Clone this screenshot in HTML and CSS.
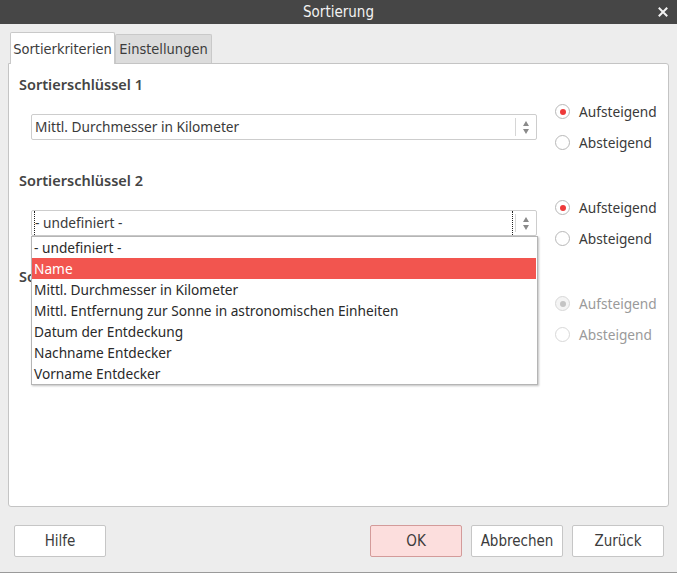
FILE: index.html
```html
<!DOCTYPE html>
<html lang="de">
<head>
<meta charset="utf-8">
<title>Sortierung</title>
<link rel="stylesheet" href="styles.css">
</head>
<body>
<div class="window">
  <header class="titlebar">
    <span class="title">Sortierung</span>
    <span class="close">
      <svg width="10" height="10" viewBox="0 0 10 10"><path d="M1.5 1.5 L8.5 8.5 M8.5 1.5 L1.5 8.5" stroke="#f2f2f2" stroke-width="2" stroke-linecap="square"/></svg>
    </span>
  </header>

  <div class="content">
    <div class="tabs">
      <div class="tab active">Sortierkriterien</div>
      <div class="tab">Einstellungen</div>
    </div>

    <div class="panel">
      <section class="section">
        <h2 class="heading">Sortierschlüssel 1</h2>
        <div class="row">
          <div class="combo">
            <span class="combo-text">Mittl. Durchmesser in Kilometer</span>
            <span class="spin"><span class="up"></span><span class="down"></span></span>
          </div>
          <div class="radios">
            <label class="radio"><span class="dot checked"></span>Aufsteigend</label>
            <label class="radio"><span class="dot"></span>Absteigend</label>
          </div>
        </div>
      </section>

      <section class="section">
        <h2 class="heading">Sortierschlüssel 2</h2>
        <div class="row">
          <div class="combo-wrap">
            <div class="combo">
              <span class="combo-text focus">- undefiniert -</span>
              <span class="spin"><span class="up"></span><span class="down"></span></span>
            </div>
            <ul class="dropdown">
              <li>- undefiniert -</li>
              <li class="selected">Name</li>
              <li>Mittl. Durchmesser in Kilometer</li>
              <li>Mittl. Entfernung zur Sonne in astronomischen Einheiten</li>
              <li>Datum der Entdeckung</li>
              <li>Nachname Entdecker</li>
              <li>Vorname Entdecker</li>
            </ul>
          </div>
          <div class="radios">
            <label class="radio"><span class="dot checked"></span>Aufsteigend</label>
            <label class="radio"><span class="dot"></span>Absteigend</label>
          </div>
        </div>
      </section>

      <section class="section">
        <h2 class="heading">Sortierschlüssel 3</h2>
        <div class="row">
          <div class="combo-spacer"></div>
          <div class="radios disabled">
            <label class="radio"><span class="dot checked"></span>Aufsteigend</label>
            <label class="radio"><span class="dot"></span>Absteigend</label>
          </div>
        </div>
      </section>
    </div>

    <div class="buttons">
      <button class="btn">Hilfe</button>
      <div class="spacer"></div>
      <button class="btn default">OK</button>
      <button class="btn">Abbrechen</button>
      <button class="btn">Zurück</button>
    </div>
  </div>
</div>
</body>
</html>
```

FILE: styles.css
```css
* { box-sizing: border-box; }

html, body {
  margin: 0;
  padding: 0;
  background: #ededed;
}

body {
  font-family: "Noto Sans", "Open Sans", sans-serif;
  font-size: 13.7px;
  color: #3a3a3a;
}

.window {
  width: 677px;
  height: 573px;
  display: flex;
  flex-direction: column;
  background: #ededed;
  border-bottom: 1px solid #9a9a9a;
}

.titlebar {
  height: 24px;
  background: #464646;
  color: #f2f2f2;
  display: flex;
  align-items: center;
  justify-content: center;
  position: relative;
  font-family: "Liberation Sans Narrow", "DejaVu Sans Condensed", sans-serif;
  font-size: 15px;
}

.close {
  position: absolute;
  right: 9px;
  top: 7px;
  width: 10px;
  height: 10px;
  display: flex;
}

.content {
  flex: 1;
  display: flex;
  flex-direction: column;
}

.tabs {
  display: flex;
  align-items: flex-end;
  padding: 8px 0 0 10px;
  height: 39px;
}

.tab {
  font-family: "Liberation Sans Narrow", "DejaVu Sans Condensed", sans-serif;
  font-size: 14.5px;
  color: #3c3c3c;
  background: #dcdcdc;
  border: 1px solid #c9c9c9;
  border-bottom: none;
  border-radius: 2px 2px 0 0;
  height: 29px;
  padding: 0 2px;
  display: flex;
  align-items: center;
  width: 97px;
  justify-content: center;
}

.tab.active {
  background: #ffffff;
  width: 105px;
  position: relative;
  z-index: 1;
  margin-bottom: -1px;
  height: 32px;
}

.panel {
  margin: 0 8px;
  height: 444px;
  background: #ffffff;
  border: 1px solid #c4c4c4;
  border-radius: 0 3px 3px 3px;
  padding: 8px 0 0 10px;
  display: flex;
  flex-direction: column;
}

.section {
  height: 96px;
  display: flex;
  flex-direction: column;
}

.heading {
  margin: 0;
  height: 24px;
  line-height: 24px;
  font-size: 14.5px;
  font-weight: 600;
  color: #444;
}

.row {
  display: flex;
  align-items: center;
  height: 62px;
}

.combo-wrap, .combo, .combo-spacer {
  margin-left: 12px;
  width: 506px;
}

.combo-wrap {
  position: relative;
  height: 26px;
}

.combo-wrap .combo {
  margin-left: 0;
}

.combo {
  height: 26px;
  border: 1px solid #cdcdcd;
  border-radius: 2px;
  background: #fff;
  display: flex;
  align-items: center;
  padding-left: 2px;
  color: #3a3a3a;
}

.combo-text {
  flex: 1;
  height: 24px;
  line-height: 24px;
  padding-left: 1px;
}

.combo-text.focus {
  border-left: 1px dotted #222;
  border-right: 1px dotted #222;
  padding-left: 0;
  margin-right: 2px;
}

.spin {
  width: 20px;
  height: 18px;
  border-left: 1px solid #d6d6d6;
  display: flex;
  flex-direction: column;
  align-items: center;
  justify-content: center;
  gap: 3px;
  margin-right: 1px;
}

.up, .down {
  width: 0;
  height: 0;
  border-left: 3px solid transparent;
  border-right: 3px solid transparent;
}
.up { border-bottom: 5px solid #8a8a8a; }
.down { border-top: 5px solid #8a8a8a; }

.dropdown {
  position: absolute;
  left: 0;
  top: 26px;
  width: 507px;
  margin: 0;
  padding: 0;
  list-style: none;
  background: #fff;
  border: 1px solid #b5b5b5;
  box-shadow: 1px 1px 2px rgba(0,0,0,0.25);
  z-index: 5;
}

.dropdown li {
  height: 21px;
  line-height: 21px;
  padding-left: 2px;
  color: #2a2a2a;
  white-space: nowrap;
}

.dropdown li.selected {
  background: #f2554f;
  color: #ffffff;
  margin-right: 1px;
}

.radios {
  margin-left: 18px;
  display: flex;
  flex-direction: column;
}

.radio {
  height: 31px;
  display: flex;
  align-items: center;
  gap: 9px;
  color: #3a3a3a;
  font-size: 13.7px;
}

.dot {
  width: 15px;
  height: 15px;
  border: 1px solid #b8b8b8;
  border-radius: 50%;
  background: #fff;
  display: flex;
  align-items: center;
  justify-content: center;
}

.dot.checked::after {
  content: "";
  width: 6px;
  height: 6px;
  border-radius: 50%;
  background: #ee3a3a;
}

.radios.disabled .radio { color: #9a9a9a; }
.radios.disabled .dot { border-color: #d8d8d8; }
.radios.disabled .dot.checked { background: #f4f4f4; }
.radios.disabled .dot.checked::after { background: #c4c4c4; }

.buttons {
  display: flex;
  align-items: center;
  padding: 18px 13px 0 14px;
  gap: 9px;
}

.spacer { flex: 1; }

.btn {
  width: 92px;
  height: 32px;
  background: #ffffff;
  border: 1px solid #c6c6c6;
  border-radius: 2px;
  font-family: "Liberation Sans Narrow", "DejaVu Sans Condensed", sans-serif;
  font-size: 15px;
  color: #3c3c3c;
  padding: 0;
}

.btn.default {
  background: #fcdedd;
  border-color: #d39b9a;
}
```
